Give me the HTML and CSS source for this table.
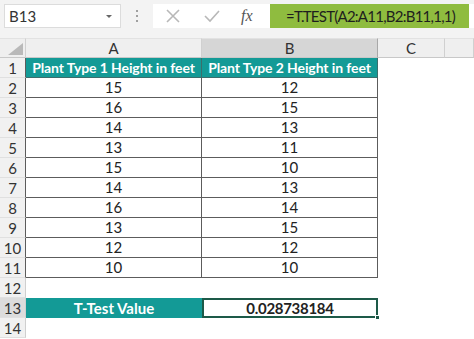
FILE: index.html
```html
<!DOCTYPE html>
<html lang="en">
<head>
<meta name="viewport" content="width=device-width, initial-scale=1">
<title>T.TEST</title>
<link rel="stylesheet" href="styles.css">
</head>
<body>

<div class="bar">
  <div class="namebox">
    <span>B13</span>
    <span class="caret"></span>
  </div>
  <div class="dots"><i></i><i></i><i></i></div>
  <div class="formula">
    <svg class="ico" width="16" height="16" viewBox="0 0 16 16"><path d="M2 2 L14 14 M14 2 L2 14" stroke="#b8b8b8" stroke-width="1.6" fill="none"/></svg>
    <svg class="ico" width="18" height="16" viewBox="0 0 18 16"><path d="M2 8 L7 13 L16 3" stroke="#b8b8b8" stroke-width="1.6" fill="none"/></svg>
    <span class="fx">fx</span>
    <div class="input">=T.TEST(A2:A11,B2:B11,1,1)</div>
  </div>
</div>

<div class="sheet">
  <div class="corner"><span class="tri"></span></div>
  <div class="colhead">A</div>
  <div class="colhead sel">B</div>
  <div class="colhead">C</div>
  <div class="colhead"></div>

  <div class="rowhead edge">1</div>
  <div class="cell head">Plant Type 1 Height in feet</div>
  <div class="cell head">Plant Type 2 Height in feet</div>
  <div class="cell"></div>
  <div class="cell"></div>

  <div class="rowhead edge">2</div>
  <div class="cell data">15</div><div class="cell data">12</div><div class="cell"></div><div class="cell"></div>
  <div class="rowhead edge">3</div>
  <div class="cell data">16</div><div class="cell data">15</div><div class="cell"></div><div class="cell"></div>
  <div class="rowhead edge">4</div>
  <div class="cell data">14</div><div class="cell data">13</div><div class="cell"></div><div class="cell"></div>
  <div class="rowhead edge">5</div>
  <div class="cell data">13</div><div class="cell data">11</div><div class="cell"></div><div class="cell"></div>
  <div class="rowhead edge">6</div>
  <div class="cell data">15</div><div class="cell data">10</div><div class="cell"></div><div class="cell"></div>
  <div class="rowhead edge">7</div>
  <div class="cell data">14</div><div class="cell data">13</div><div class="cell"></div><div class="cell"></div>
  <div class="rowhead edge">8</div>
  <div class="cell data">16</div><div class="cell data">14</div><div class="cell"></div><div class="cell"></div>
  <div class="rowhead edge">9</div>
  <div class="cell data">13</div><div class="cell data">15</div><div class="cell"></div><div class="cell"></div>
  <div class="rowhead edge">10</div>
  <div class="cell data">12</div><div class="cell data">12</div><div class="cell"></div><div class="cell"></div>
  <div class="rowhead edge">11</div>
  <div class="cell data">10</div><div class="cell data">10</div><div class="cell"></div><div class="cell"></div>

  <div class="rowhead">12</div>
  <div class="cell"></div><div class="cell"></div><div class="cell"></div><div class="cell"></div>

  <div class="rowhead sel">13</div>
  <div class="cell label">T-Test Value</div>
  <div class="cell active">0.028738184<span class="handle"></span></div>
  <div class="cell"></div><div class="cell"></div>

  <div class="rowhead">14</div>
  <div class="cell"></div><div class="cell"></div><div class="cell"></div><div class="cell"></div>
</div>

</body>
</html>
```

FILE: styles.css
```css
* { box-sizing: border-box; }
body {
  margin: 0;
  width: 474px;
  height: 339px;
  overflow: hidden;
  background: #fff;
  font-family: 'Lato', 'Liberation Sans', sans-serif;
  color: #222;
}

/* formula bar */
.bar {
  height: 38px;
  background: #f3f3f3;
  display: flex;
  align-items: flex-start;
  padding-top: 4px;
}
.namebox {
  margin-left: 4px;
  width: 117px;
  height: 24px;
  background: #fff;
  border: 1px solid #dcdcdc;
  display: flex;
  align-items: center;
  justify-content: space-between;
  padding: 0 8px 0 4px;
  font-size: 15px;
  color: #333;
}
.caret {
  width: 0;
  height: 0;
  border-left: 3px solid transparent;
  border-right: 3px solid transparent;
  border-top: 3px solid #666;
}
.dots {
  width: 32px;
  height: 24px;
  display: flex;
  flex-direction: column;
  align-items: center;
  justify-content: center;
  gap: 3px;
}
.dots i {
  width: 2px;
  height: 2px;
  background: #a0a0a0;
  display: block;
}
.formula {
  flex: 1;
  height: 24px;
  background: #fff;
  display: flex;
  align-items: center;
  padding-left: 12px;
}
.ico { margin-right: 22px; }
.fx {
  font-family: 'Liberation Serif', serif;
  font-style: italic;
  font-size: 16px;
  color: #555;
  margin-left: -2px;
  width: 29px;
}
.input {
  width: 199px;
  height: 24px;
  background: #8fbc3f;
  font-size: 15px;
  letter-spacing: -0.75px;
  line-height: 24px;
  padding-left: 16px;
  color: #1e1e1e;
  white-space: nowrap;
  overflow: hidden;
}

/* sheet grid */
.sheet {
  display: grid;
  grid-template-columns: 26px 176px 176px 67px 29px;
  grid-auto-rows: 20px;
  font-size: 15px;
}
.corner {
  background: #efefef;
  border-right: 1px solid #d0d0d0;
  border-bottom: 1px solid #c8c8c8;
  border-top: 1px solid #e2e2e2;
  position: relative;
}
.tri {
  position: absolute;
  right: 2px;
  bottom: 2px;
  width: 0;
  height: 0;
  border-left: 15px solid transparent;
  border-bottom: 12px solid #b9b9b9;
}
.colhead {
  background: #efefef;
  border-right: 1px solid #d0d0d0;
  border-bottom: 1px solid #c8c8c8;
  border-top: 1px solid #e2e2e2;
  text-align: center;
  line-height: 19px;
  color: #333;
}
.colhead.sel { background: #d6d6d6; border-right-color: #a8a8a8; }
.rowhead {
  background: #f1f1f1;
  border-right: 1px solid #cfcfcf;
  border-bottom: 1px solid #e0e0e0;
  text-align: center;
  line-height: 20px;
  color: #333;
}
.rowhead.edge { border-right-color: #5c5c5c; }
.rowhead.sel { background: #dcdcdc; }
.cell {
  text-align: center;
  line-height: 19px;
  white-space: nowrap;
}
.cell.data {
  border-right: 1px solid #5c5c5c;
  border-bottom: 1px solid #5c5c5c;
}
.cell.head {
  background: #139a96;
  color: #fff;
  font-weight: bold;
  font-size: 14px;
  letter-spacing: -0.1px;
  border-right: 1px solid #3b6e6c;
  border-bottom: 1px solid #3b6e6c;
}
.cell.label {
  background: #139a96;
  color: #fff;
  font-weight: bold;
  line-height: 20px;
}
.cell.active {
  border: 2px solid #1d5a48;
  font-weight: bold;
  letter-spacing: -0.3px;
  line-height: 16px;
  position: relative;
}
.handle {
  position: absolute;
  right: -4px;
  bottom: -4px;
  width: 5px;
  height: 5px;
  background: #1d5a48;
  border: 1px solid #fff;
}
```
